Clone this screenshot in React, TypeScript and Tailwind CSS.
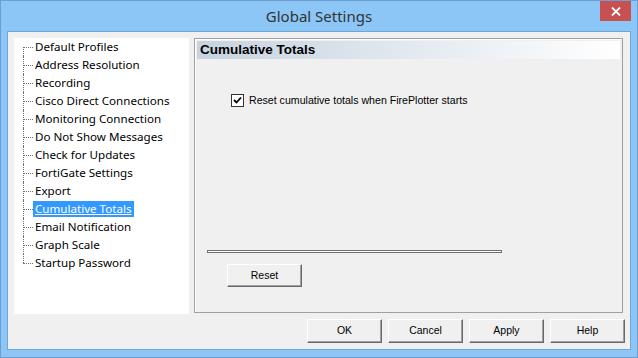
import React from 'react';

const treeItems = [
  'Default Profiles',
  'Address Resolution',
  'Recording',
  'Cisco Direct Connections',
  'Monitoring Connection',
  'Do Not Show Messages',
  'Check for Updates',
  'FortiGate Settings',
  'Export',
  'Cumulative Totals',
  'Email Notification',
  'Graph Scale',
  'Startup Password',
];

const SELECTED = 'Cumulative Totals';

function WinButton({ label, className = '' }: { label: string; className?: string }) {
  return (
    <button
      className={`flex items-center justify-center border border-t-white border-l-white border-b-[#696969] border-r-[#696969] bg-[#f0f0f0] text-[10.5px] text-black shadow-[inset_-1px_-1px_0_#a0a0a0] ${className}`}
      style={{ fontFamily: '"Liberation Sans", Arial, sans-serif' }}
    >
      {label}
    </button>
  );
}

function TreeRow({ label, index, last }: { label: string; index: number; last: boolean }) {
  const selected = label === SELECTED;
  return (
    <div className="flex h-[18px]">
      <div className="relative ml-[9px] w-[10px] shrink-0">
        <div
          className={`absolute left-0 border-l border-dotted border-[#707070] ${
            index === 0 ? 'top-[9px] bottom-0' : last ? 'top-0 h-[9px]' : 'top-0 bottom-0'
          }`}
        />
        <div className="absolute left-0 top-[9px] w-full border-t border-dotted border-[#707070]" />
      </div>
      <div className="flex items-center">
        <span
          className={`flex h-[16px] items-center px-[2px] text-[11.6px] leading-none ${
            selected ? 'bg-[#3399ff] text-white underline' : 'text-black'
          }`}
        >
          {label}
        </span>
      </div>
    </div>
  );
}

export default function App() {
  return (
    <div
      className="flex h-[358px] w-[638px] flex-col border border-[#6b9fd2] bg-[#8bc6f7]"
      style={{ fontFamily: '"Noto Sans", "Open Sans", sans-serif' }}
    >
      {/* title bar */}
      <div className="relative flex h-[30px] shrink-0 items-center justify-center">
        <span className="text-[15px] text-[#333]">Global Settings</span>
        <div className="absolute right-[6px] top-0 flex h-[20px] w-[31px] items-center justify-center bg-[#c75050]">
          <svg width="10" height="9" viewBox="0 0 10 9">
            <path d="M1 0.5 L9 8.5 M9 0.5 L1 8.5" stroke="white" strokeWidth="1.8" />
          </svg>
        </div>
      </div>

      {/* client area */}
      <div className="mx-[6px] mb-[7px] flex flex-1 flex-col border border-[#6fa6d8] bg-[#f0f0f0] pl-[6px] pr-[5px] pt-[6px]">
        <div className="mr-[2px] flex gap-[5px]">
          {/* tree */}
          <div className="h-[276px] w-[175px] shrink-0 bg-white">
            {treeItems.map((item, i) => (
              <TreeRow key={item} label={item} index={i} last={i === treeItems.length - 1} />
            ))}
          </div>

          {/* settings panel */}
          <div className="flex h-[275px] flex-1 flex-col border border-[#a0a0a0] p-[2px] shadow-[inset_1px_1px_0_#fff]">
            <div
              className="flex h-[18px] items-center bg-gradient-to-r from-[#c6d3e0] to-white px-[3px] text-[13.5px] font-bold text-black"
              style={{ fontFamily: '"Liberation Sans", Arial, sans-serif' }}
            >
              Cumulative Totals
            </div>

            <div
              className="flex flex-1 flex-col pl-[10px]"
              style={{ fontFamily: '"Liberation Sans", Arial, sans-serif' }}
            >
              <div className="mt-[34px] flex items-center pl-[24px]">
                <div className="flex h-[13px] w-[13px] items-center justify-center border border-[#333] bg-white">
                  <svg width="9" height="9" viewBox="0 0 9 9">
                    <path d="M1 4 L3.5 6.5 L8 1.5" fill="none" stroke="black" strokeWidth="1.8" />
                  </svg>
                </div>
                <span className="ml-[5px] text-[10.6px] text-black">Reset cumulative totals when FirePlotter starts</span>
              </div>

              <div className="mt-[141px] h-[3px] w-[295px] border border-[#707070] bg-white" />

              <WinButton label="Reset" className="ml-[20px] mt-[11px] h-[23px] w-[75px]" />
            </div>
          </div>
        </div>

        {/* footer buttons */}
        <div className="mt-[5px] flex justify-end gap-[6px]">
          <WinButton label="OK" className="h-[24px] w-[75px]" />
          <WinButton label="Cancel" className="h-[24px] w-[75px]" />
          <WinButton label="Apply" className="h-[24px] w-[75px]" />
          <WinButton label="Help" className="h-[24px] w-[75px]" />
        </div>
      </div>
    </div>
  );
}
